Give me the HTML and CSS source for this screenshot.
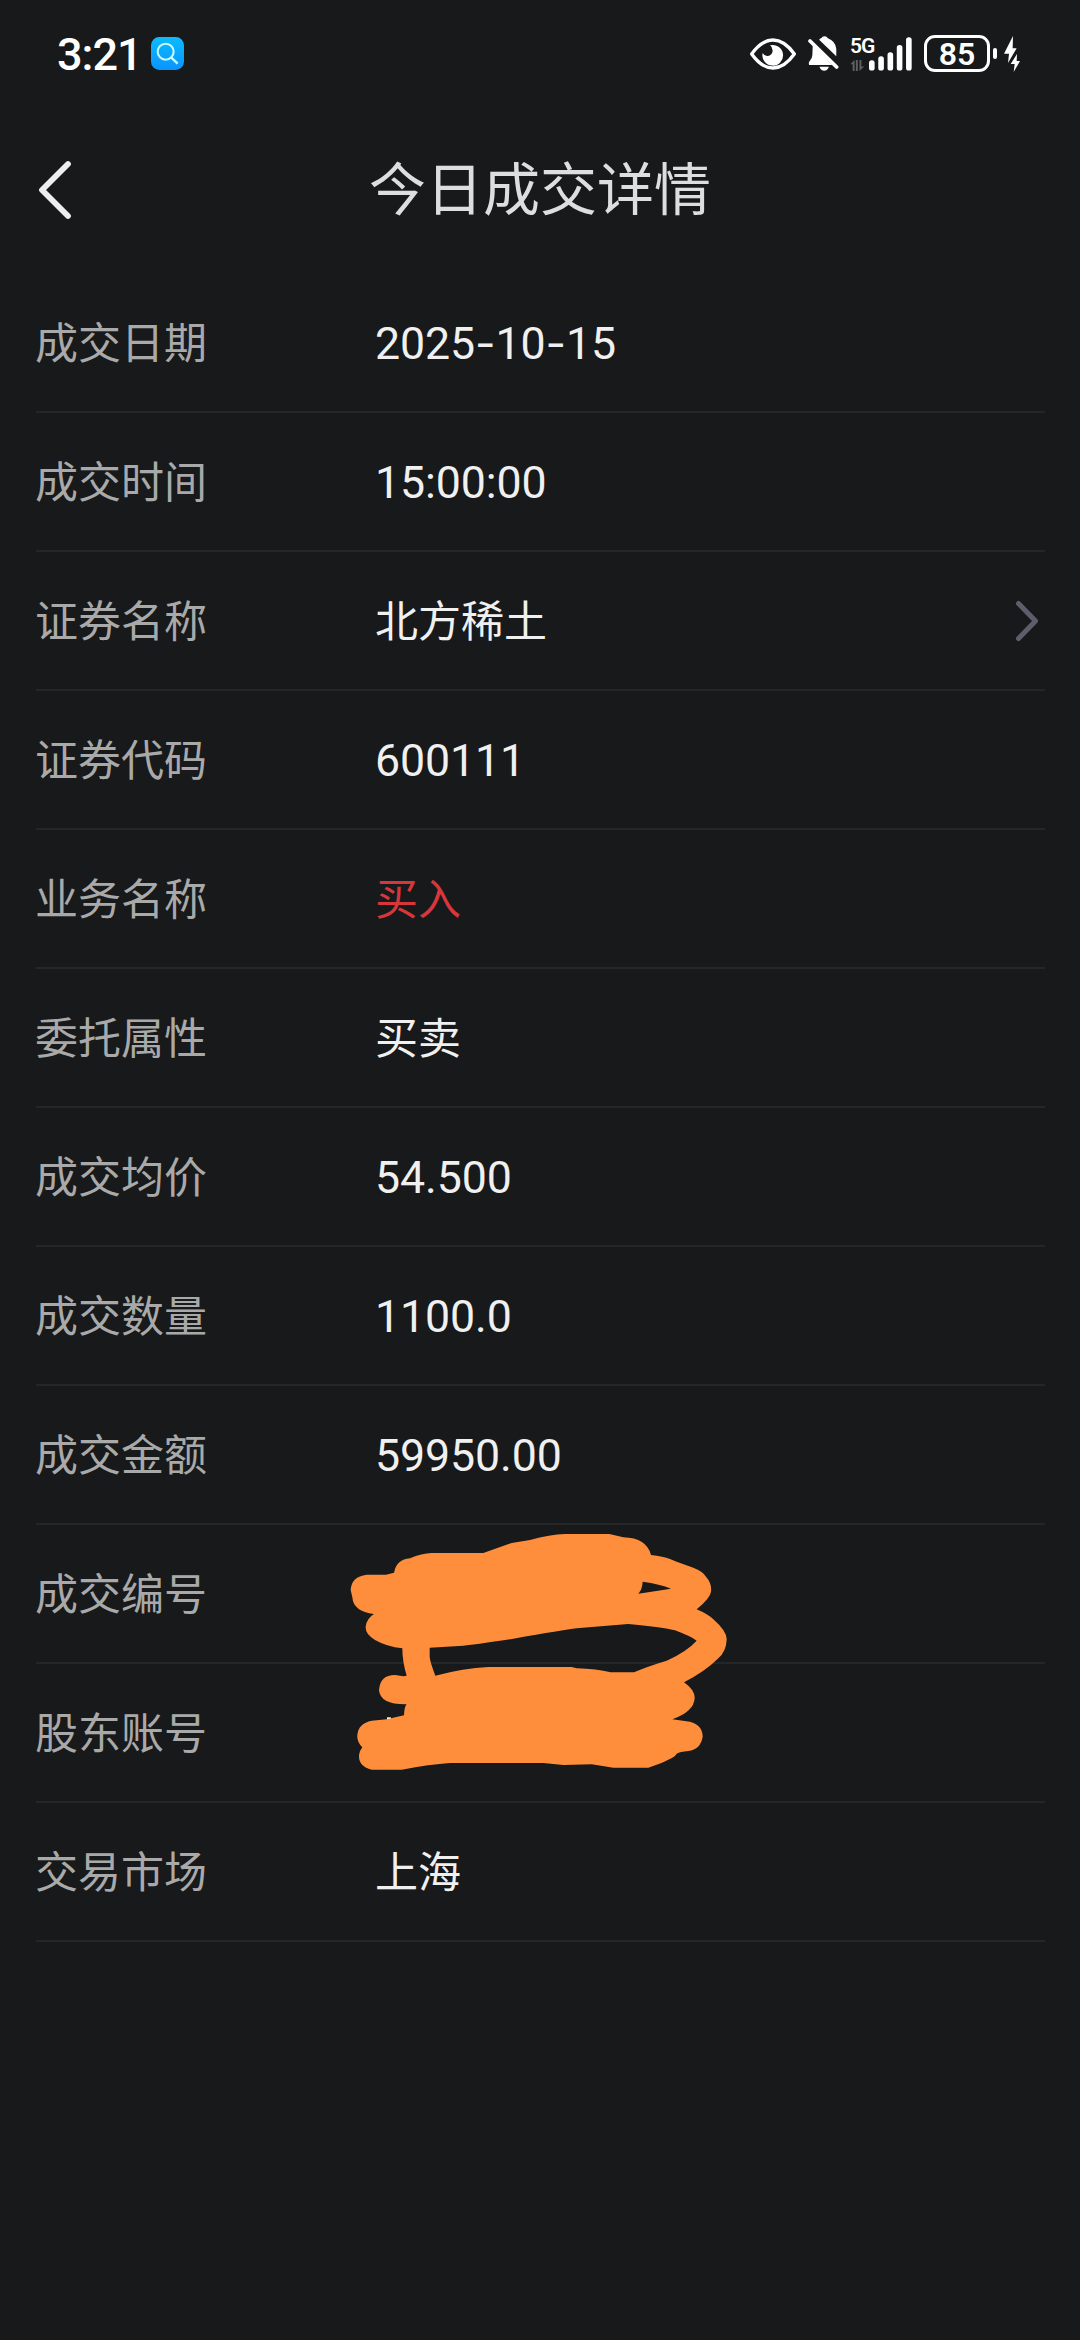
FILE: index.html
```html
<!DOCTYPE html>
<html lang="zh-CN">
<head>
  <meta charset="UTF-8" />
  <title>今日成交详情</title>
  <link rel="stylesheet" href="styles.css">
</head>
<body>
  <div class="status-bar">
    <span class="time">3:21</span>
    <svg class="app-icon" viewBox="0 0 99 99">
      <defs>
        <linearGradient id="sky" x1="0" y1="0" x2="0" y2="1">
          <stop offset="0" stop-color="#0bbcff"/>
          <stop offset="1" stop-color="#0a94fe"/>
        </linearGradient>
      </defs>
      <rect width="99" height="99" rx="25" fill="url(#sky)"/>
      <circle cx="44" cy="44" r="24" fill="none" stroke="#c9fbff" stroke-width="6"/>
      <path d="M61 62 L80 80" stroke="#c9fbff" stroke-width="7"/>
    </svg>
    <div class="status-icons">
      <svg class="eye" viewBox="0 0 138 96">
        <path d="M5 48 Q35 6 69 6 Q103 6 133 48 Q103 90 69 90 Q35 90 5 48 Z" fill="none" stroke="#fff" stroke-width="10" stroke-linejoin="round"/>
        <path d="M60 22 A31 31 0 1 1 38 45 Q43 55 53 54 Q67 51 68 38 Q68 27 60 22 Z" fill="#fff"/>
      </svg>
      <svg class="bell" viewBox="0 0 92 104">
        <path d="M14 26 L72 86 H3 Q1 79 4 76 Q13 68 13 56 Z" fill="#fff"/>
        <path d="M33 11 Q37 7 40 6 Q42 1 49 1 Q56 1 59 7 Q81 15 84 38 V60 Z" fill="#fff"/>
        <path d="M34 91 H62 Q58 103 48 103 Q38 103 34 91 Z" fill="#fff"/>
        <path d="M6 15 L85 92" stroke="#fff" stroke-width="11" stroke-linecap="round"/>
      </svg>
      <div class="network">
        <span class="net-type">5G</span>
        <svg class="arrows" viewBox="0 0 44 34">
          <path d="M0 13 L13 0 V34 H7 V13 Z M17 0 V34 H23 V0 Z M28 0 H34 V20 H43 L28 34 Z" fill="#606162"/>
        </svg>
      </div>
      <svg class="signal" viewBox="0 0 130 102">
        <rect x="0" y="70" width="17" height="31" rx="8" fill="#fff"/>
        <rect x="28" y="58" width="17" height="43" rx="8" fill="#fff"/>
        <rect x="56" y="46" width="17" height="55" rx="8" fill="#fff"/>
        <rect x="84" y="24" width="17" height="77" rx="8" fill="#fff"/>
        <rect x="112" y="0" width="17" height="101" rx="8" fill="#fff"/>
      </svg>
      <div class="battery">85</div>
      <div class="battery-cap"></div>
      <svg class="bolt" viewBox="0 0 48 108">
        <path d="M27 0 L0 53 H15 L12 81 L38 37 H26 Z M39 54 L20 84 H32 L29 108 L48 75 H38 Z" fill="#fff"/>
      </svg>
    </div>
  </div>

  <header class="header">
    <svg class="back" viewBox="0 0 34 60">
      <path d="M30 4 L4 30 L30 56" fill="none" stroke="#eee" stroke-width="5.8" stroke-linecap="round" stroke-linejoin="round"/>
    </svg>
    <h1>今日成交详情</h1>
  </header>

  <main class="list">
    <div class="row"><span class="label">成交日期</span><span class="value">2025<span class="dash">-</span>10<span class="dash">-</span>15</span></div>
    <div class="row"><span class="label">成交时间</span><span class="value">15:00:00</span></div>
    <div class="row">
      <span class="label">证券名称</span><span class="value text">北方稀土</span>
      <svg class="arrow" viewBox="0 0 24 42">
        <path d="M3.5 3.5 L20.5 21 L3.5 38.5" fill="none" stroke="#5c5f6b" stroke-width="5" stroke-linecap="round" stroke-linejoin="round"/>
      </svg>
    </div>
    <div class="row"><span class="label">证券代码</span><span class="value">600111</span></div>
    <div class="row"><span class="label">业务名称</span><span class="value text buy">买入</span></div>
    <div class="row"><span class="label">委托属性</span><span class="value text">买卖</span></div>
    <div class="row"><span class="label">成交均价</span><span class="value">54.500</span></div>
    <div class="row"><span class="label">成交数量</span><span class="value">1100.0</span></div>
    <div class="row"><span class="label">成交金额</span><span class="value">59950.00</span></div>
    <div class="row masked">
      <span class="label">成交编号</span>
      <!-- marker strokes over the two private numbers -->
      <svg class="scribble" viewBox="0 0 1260 840">
        <path fill="#fff" d="M171 622 H183 V630 H171 Z"/>
        <path fill="#ff8e3c" fill-rule="evenodd" d="M62 240 Q64 200 110 194 H168 L192 188 Q200 148 240 145 Q275 130 305 129 H460 L545 99 L600 90 Q660 73 705 72 H838 L880 82 Q950 84 963 135 Q1000 140 1020 147 L1040 155 L1090 173 Q1120 185 1128 200 Q1146 220 1143 245 Q1141 264 1100 298 Q1135 313 1150 328 Q1192 365 1190 390 Q1188 425 1165 445 Q1125 485 1062 517 Q1095 540 1094 565 Q1092 605 1027 628 L1080 635 Q1118 645 1118 680 Q1112 718 1075 723 Q1050 725 1040 731 Q1035 745 955 773 H850 L785 763 L700 765 L640 759 H360 Q300 763 215 779 H125 Q85 770 87 735 Q90 720 97 712 Q80 695 82 675 Q85 640 125 632 L170 628 L222 616 Q223 590 230 583 Q150 584 147 540 Q150 495 195 495 L220 499 L230 497 Q217 455 217 415 Q170 410 135 390 Q105 372 107 350 Q110 325 132 312 Q70 305 67 262 Z
          M938 215 Q990 222 1023 236 L925 251 Q937 238 938 215 Z
          M299 413 L400 407 Q440 403 550 386 Q700 360 740 355 L895 342 Q990 350 1035 361 Q1085 380 1100 392 Q1070 425 1010 452 Q950 470 912 487 H842 Q800 477 740 475 L725 471 H475 Q400 475 316 497 Q300 455 299 440 Z"/>
      </svg>
    </div>
    <div class="row"><span class="label">股东账号</span></div>
    <div class="row"><span class="label">交易市场</span><span class="value text">上海</span></div>
  </main>
</body>
</html>
```

FILE: styles.css
```css
* {
  box-sizing: border-box;
}

body {
  margin: 0;
  min-height: 2340px;
  background: #17191a;
  color: #f0f0f0;
  font-family: Roboto, "Noto Sans CJK SC", sans-serif;
}

svg {
  display: block;
  flex: none;
}

.status-bar {
  display: flex;
  align-items: center;
  height: 107px;
  padding: 0 60px 0 57px;
  color: #fff;
}

.time {
  width: 94px;
  padding-top: 2px;
  font-size: 45px;
  font-weight: 500;
  line-height: 52px;
  letter-spacing: -1px;
}

.app-icon {
  width: 33px;
  height: 33px;
}

.status-icons {
  display: flex;
  align-items: center;
  margin-left: auto;
}

.eye {
  width: 46px;
  height: 32px;
}

.bell {
  width: 31px;
  height: 35px;
  margin-left: 12px;
}

.network {
  width: 19px;
  height: 34px;
  margin-left: 11px;
}

.net-type {
  display: block;
  font-size: 21px;
  font-weight: 600;
  line-height: 18px;
  letter-spacing: -1px;
  white-space: nowrap;
}

.arrows {
  width: 15px;
  height: 11px;
  margin-top: 5px;
}

.signal {
  width: 43px;
  height: 34px;
}

.battery {
  width: 66px;
  height: 37px;
  margin-left: 12px;
  border: 3px solid #fff;
  border-radius: 11px;
  font-size: 32px;
  font-weight: 600;
  line-height: 32px;
  text-align: center;
}

.battery-cap {
  width: 4px;
  height: 11px;
  margin-left: 3px;
  border-radius: 2px;
  background: #fff;
}

.bolt {
  width: 16px;
  height: 36px;
  margin-left: 7px;
}

.header {
  display: flex;
  align-items: center;
  height: 167px;
  padding: 0 38px 2px;
}

.back {
  width: 34px;
  height: 60px;
}

h1 {
  flex: 1;
  margin: 2px 34px 0 0;
  color: #dedede;
  font-size: 57px;
  font-weight: 400;
  line-height: 80px;
  text-align: center;
}

.list {
  padding: 0 35px 0 36px;
}

.row {
  display: flex;
  align-items: center;
  height: 139px;
  border-bottom: 2px solid #252628;
}

.label {
  width: 339px;
  padding-bottom: 6px;
  color: #a9a9a9;
  font-family: "Noto Sans CJK SC", sans-serif;
  font-size: 43px;
  line-height: 60px;
  text-indent: -1px;
}

.value {
  padding-top: 2px;
  font-size: 44.7px;
  line-height: 60px;
  letter-spacing: -0.1px;
}

.text {
  font-size: 43px;
  letter-spacing: 0;
}

.dash {
  font-family: Inter, sans-serif;
}

.buy {
  color: #d9363b;
}

.arrow {
  width: 24px;
  height: 42px;
  margin-left: auto;
  margin-right: 6px;
}

.masked {
  position: relative;
}

.scribble {
  position: absolute;
  top: -15px;
  left: 294px;
  z-index: 1;
  width: 420px;
  height: 280px;
}
```
